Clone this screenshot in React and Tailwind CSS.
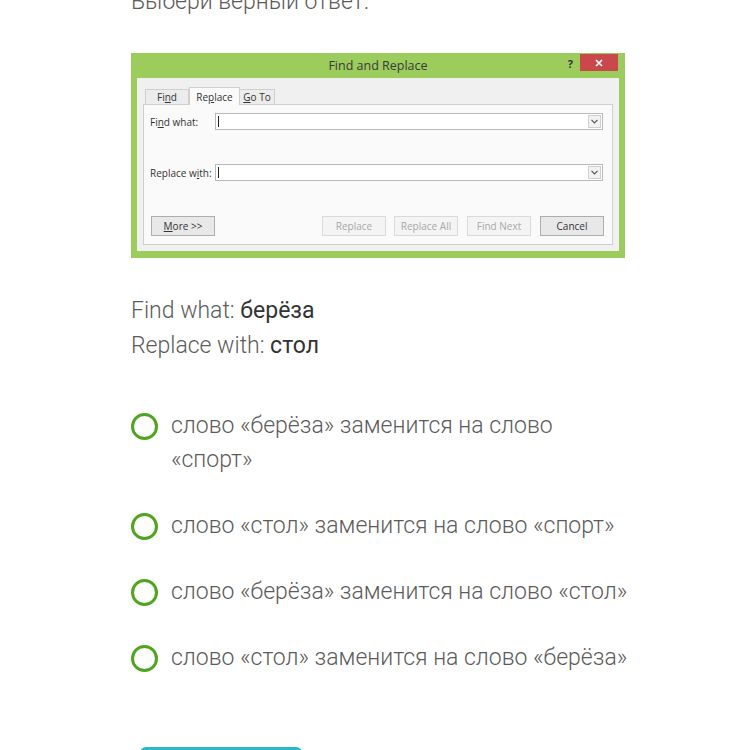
const options = [
  'слово «берёза» заменится на слово «спорт»',
  'слово «стол» заменится на слово «спорт»',
  'слово «берёза» заменится на слово «стол»',
  'слово «стол» заменится на слово «берёза»',
];

const DialogButton = ({ children, disabled, className = '' }) => (
  <div
    className={`w-[64px] h-[20px] flex items-center justify-center text-[10px] border ${
      disabled ? 'bg-[#f4f4f4] border-[#dadada] text-[#a8a8a8]' : 'bg-[#e8e8e8] border-[#adadad] text-[#333]'
    } ${className}`}
  >
    {children}
  </div>
);

const ComboInput = () => (
  <div className="w-[388px] h-[17px] bg-white border border-[#b9b9b9] flex items-center justify-between">
    <span className="ml-[2px] w-px h-[11px] bg-[#222]" />
    <span className="w-[13px] h-[13px] mr-[1px] border border-[#cfcfcf] bg-[#f2f2f2] flex items-center justify-center">
      <svg width="7" height="5" viewBox="0 0 7 5">
        <path d="M0.5 0.8 L3.5 3.8 L6.5 0.8" fill="none" stroke="#555" strokeWidth="1.2" />
      </svg>
    </span>
  </div>
);

const FindReplaceDialog = () => (
  <div className="w-[494px] h-[205px] bg-[#9ccc5c] flex flex-col px-[6px] pb-[7px] font-['Open_Sans',sans-serif] font-normal leading-[normal]">
    <div className="h-[25px] shrink-0 flex items-center relative">
      <span className="flex-1 text-center text-[12.5px] text-[#3a3a3a]">Find and Replace</span>
      <span className="absolute right-[46px] top-[3px] text-[11px] font-bold text-[#333]">?</span>
      <span className="absolute right-[1px] top-[1px] w-[38px] h-[17px] bg-[#c9484b] flex items-center justify-center">
        <svg width="8" height="8" viewBox="0 0 8 8">
          <path d="M1 1 L7 7 M7 1 L1 7" stroke="#fff" strokeWidth="1.6" />
        </svg>
      </span>
    </div>
    <div className="flex-1 bg-[#f0f0f0] flex flex-col px-[6px] pb-[6px] min-h-0">
      <div className="flex items-end pl-[2px] h-[26px] shrink-0 text-[10px] text-[#333]">
        <div className="h-[15px] w-[44px] border border-b-0 border-[#cfcfcf] bg-[#ececec] flex items-center justify-center">
          Fi<u>n</u>d
        </div>
        <div className="h-[18px] w-[51px] border border-b-0 border-[#cfcfcf] bg-[#fafafa] flex items-center justify-center -mb-px relative">
          Re<u>p</u>lace
        </div>
        <div className="h-[15px] w-[35px] border border-b-0 border-l-0 border-[#cfcfcf] bg-[#ececec] flex items-center justify-center">
          <u>G</u>o To
        </div>
      </div>
      <div className="flex-1 bg-[#fafafa] border border-[#cfcfcf] flex flex-col pl-[6px] pt-[8px] text-[10px] text-[#333]">
        <div className="flex items-center h-[17px]">
          <span className="w-[65px]">Fi<u>n</u>d what:</span>
          <ComboInput />
        </div>
        <div className="flex items-center h-[17px] mt-[34px]">
          <span className="w-[65px]">Replace w<u>i</u>th:</span>
          <ComboInput />
        </div>
        <div className="flex items-center mt-[35px] pl-[1px]">
          <DialogButton><span><u>M</u>ore &gt;&gt;</span></DialogButton>
          <DialogButton disabled className="ml-[107px]">Replace</DialogButton>
          <DialogButton disabled className="ml-[8px]">Replace All</DialogButton>
          <DialogButton disabled className="ml-[9px]">Find Next</DialogButton>
          <DialogButton className="ml-[9px]">Cancel</DialogButton>
        </div>
      </div>
    </div>
  </div>
);

export default function App() {
  return (
    <div className="w-[750px] h-[750px] overflow-hidden bg-white font-['Roboto',sans-serif] font-light text-[23px] leading-[34px] text-[#5b5b5b]">
      <div className="ml-[131px] w-[494px] flex flex-col">
        <p className="mt-[-15px]">Выбери верный ответ.</p>
        <div className="mt-[34px]">
          <FindReplaceDialog />
        </div>
        <div className="mt-[35px] leading-[35px]">
          <p>Find what: <span className="font-normal text-[#333]">берёза</span></p>
          <p>Replace with: <span className="font-normal text-[#333]">стол</span></p>
        </div>
        <div className="mt-[46px] flex flex-col gap-[32px]">
          {options.map((o) => (
            <label key={o} className="flex items-start">
              <span className="mt-[4px] w-[27px] h-[27px] shrink-0 rounded-full border-[3px] border-[#4fa51f]" />
              <span className="ml-[13px] w-[462px] shrink-0">{o}</span>
            </label>
          ))}
        </div>
        <div className="mt-[72px] ml-[9px] w-[162px] h-[44px] rounded-[6px] bg-[#2bb6c9]" />
      </div>
    </div>
  );
}
